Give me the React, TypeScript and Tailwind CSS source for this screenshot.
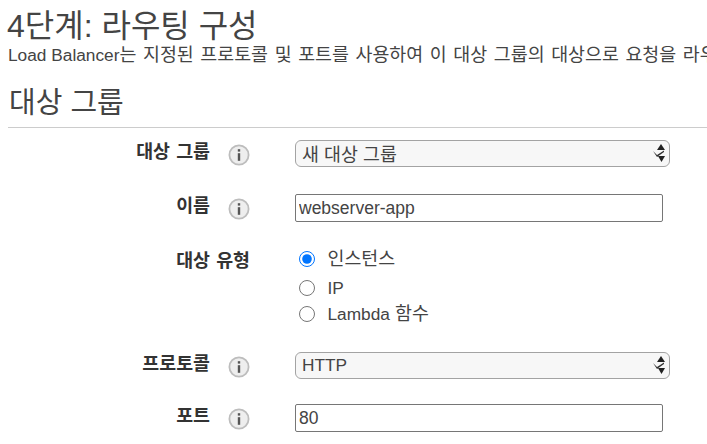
import React from "react";

const font = { fontFamily: '"Liberation Sans","Noto Sans CJK KR",sans-serif' };

function Info() {
  return (
    <svg width="22" height="22" viewBox="0 0 22 22" className="shrink-0">
      <circle cx="11" cy="11" r="9.6" fill="#eeeeee" stroke="#bdbdbd" strokeWidth="1.8" />
      <rect x="9.8" y="9.2" width="2.4" height="7.6" fill="#555555" />
      <rect x="9.8" y="5.2" width="2.4" height="2.4" fill="#555555" />
    </svg>
  );
}

function Arrows() {
  return (
    <svg width="14" height="20" viewBox="0 0 14 20" className="absolute right-[4px] top-[3px] pointer-events-none">
      <path d="M9 1 L13 7 L5 7 Z" fill="#222222" />
      <path d="M1 8 L5 12 L12 7.5 L12 9 L5 14 Z" fill="#333333" />
      <path d="M6 13 L13 13 L9.5 19 Z" fill="#222222" />
    </svg>
  );
}

function Select({ value, latin }: { value: string; latin?: boolean }) {
  return (
    <div className="relative w-[375px] h-[27px]">
      <select
        defaultValue={value}
        className={`appearance-none w-full h-full rounded-[6px] border border-[#a3a3a3] bg-[#f7f7f7] pl-[6px] text-[#444444] outline-none ${latin ? "text-[17.3px]" : "text-[18.4px]"}`}
        style={font}
      >
        <option>{value}</option>
      </select>
      <Arrows />
    </div>
  );
}

function TextInput({ value }: { value: string }) {
  return (
    <input
      defaultValue={value}
      className="w-[368px] h-[28px] rounded-[2px] border border-[#767676] bg-white px-[3px] text-[17.5px] text-[#444444] outline-none"
      style={font}
    />
  );
}

const labelClass = "shrink-0 text-right text-[18.4px] leading-[24px] font-bold text-[#333333] [word-spacing:1px]";

function Row({ label, className, children }: { label: string; className: string; children: React.ReactNode }) {
  return (
    <div className={`flex items-start ${className}`}>
      <div className={`w-[210px] ${labelClass}`}>{label}</div>
      <div className="w-[85px] shrink-0 pl-[18px] pt-[4px]">
        <Info />
      </div>
      {children}
    </div>
  );
}

function Radio({ label, checked, className }: { label: React.ReactNode; checked?: boolean; className: string }) {
  return (
    <label className={`flex items-center ${className}`}>
      <input type="radio" name="target" defaultChecked={checked} className="w-4 h-4 m-0 ml-[4px] accent-[#0075ff]" />
      <span className="ml-[12.5px] text-[18.4px] leading-[24px] text-[#444444]">{label}</span>
    </label>
  );
}

export default function App() {
  return (
    <div className="w-[707px] h-[444px] overflow-hidden bg-white text-[#444444]" style={font}>
      <h1 className="pl-[7px] pt-[8px] text-[32px] leading-[36px] font-normal text-[#444444] whitespace-nowrap">4단계: 라우팅 구성</h1>
      <p className="pl-[8px] -mt-[1px] text-[18.4px] leading-[24px] whitespace-nowrap [word-spacing:1.5px]">
        <span className="text-[17.3px] [word-spacing:0px]">Load Balancer</span>는 지정된 프로토콜 및 포트를 사용하여 이 대상 그룹의 대상으로 요청을 라우팅합니다.
      </p>
      <h2 className="pl-[9px] mt-[18px] text-[29px] leading-[36px] font-normal text-[#444444]">대상 그룹</h2>
      <div className="ml-[8px] mt-[6px] h-px bg-[#cccccc]" />
      <Row label="대상 그룹" className="mt-[12px]">
        <Select value="새 대상 그룹" />
      </Row>
      <Row label="이름" className="mt-[27px]">
        <TextInput value="webserver-app" />
      </Row>
      <div className="flex items-start mt-[27px]">
        <div className={`w-[250px] ${labelClass}`}>대상 유형</div>
        <div className="flex flex-col ml-[45px]">
          <Radio label="인스턴스" checked className="h-[28px] -mt-[4px]" />
          <Radio label={<span className="text-[17.3px]">IP</span>} className="h-[30px]" />
          <Radio label={<><span className="text-[17.3px]">Lambda</span> 함수</>} className="h-[22px]" />
        </div>
      </div>
      <Row label="프로토콜" className="mt-[27px]">
        <Select value="HTTP" latin />
      </Row>
      <Row label="포트" className="mt-[25px]">
        <TextInput value="80" />
      </Row>
    </div>
  );
}
